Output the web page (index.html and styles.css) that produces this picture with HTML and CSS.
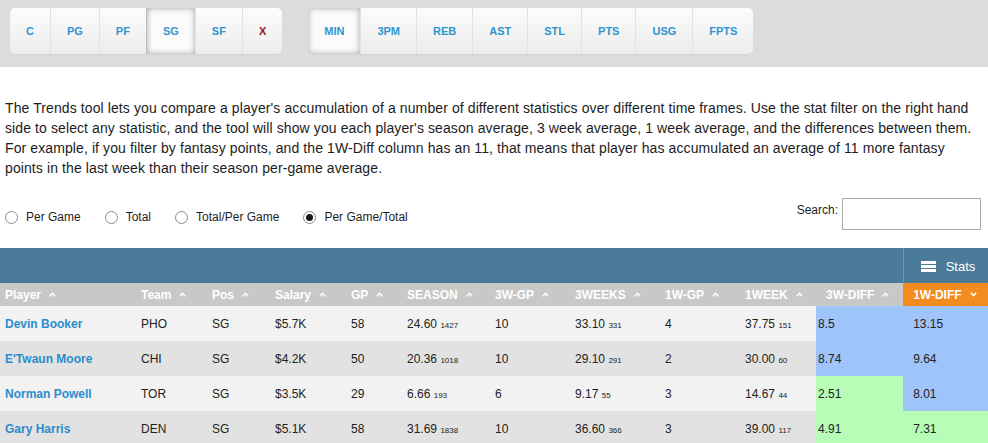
FILE: index.html
```html
<!DOCTYPE html>
<html>
<head>
<meta charset="utf-8">
<link rel="stylesheet" href="styles.css">
</head>
<body>
<div class="topbar">
  <div class="btn-group">
    <span class="btn">C</span>
    <span class="btn">PG</span>
    <span class="btn">PF</span>
    <span class="btn active">SG</span>
    <span class="btn">SF</span>
    <span class="btn clear">X</span>
  </div>
  <div class="btn-group">
    <span class="btn active">MIN</span>
    <span class="btn">3PM</span>
    <span class="btn">REB</span>
    <span class="btn">AST</span>
    <span class="btn">STL</span>
    <span class="btn">PTS</span>
    <span class="btn">USG</span>
    <span class="btn">FPTS</span>
  </div>
</div>

<div class="intro">
  <p>The Trends tool lets you compare a player's accumulation of a number of different statistics over different time frames. Use the stat filter on the right hand side to select any statistic, and the tool will show you each player's season average, 3 week average, 1 week average, and the differences between them. For example, if you filter by fantasy points, and the 1W-Diff column has an 11, that means that player has accumulated an average of 11 more fantasy points in the last week than their season per-game average.</p>
</div>

<div class="controls">
  <div class="radios">
    <label class="opt"><input type="radio" name="mode"><span>Per Game</span></label>
    <label class="opt"><input type="radio" name="mode"><span>Total</span></label>
    <label class="opt"><input type="radio" name="mode"><span>Total/Per Game</span></label>
    <label class="opt"><input type="radio" name="mode" checked><span>Per Game/Total</span></label>
  </div>
  <label class="search">Search:<input type="text"></label>
</div>

<table class="grid">
  <colgroup>
    <col style="width:136px"><col style="width:71px"><col style="width:63px"><col style="width:76px">
    <col style="width:56px"><col style="width:88px"><col style="width:80px"><col style="width:90px">
    <col style="width:80px"><col style="width:76px"><col style="width:87px"><col style="width:85px">
  </colgroup>
  <thead>
    <tr class="bar">
      <th colspan="11"></th>
      <th class="stats"><svg width="15" height="11" viewBox="0 0 15 11"><rect x="0" y="0" width="15" height="3" fill="#fff"/><rect x="0" y="4" width="15" height="3" fill="#fff"/><rect x="0" y="8" width="15" height="3" fill="#fff"/></svg><span>Stats</span></th>
    </tr>
    <tr class="heads">
      <th>Player<svg class="caret" width="7" height="5" viewBox="0 0 7 5"><path d="M0.8 4.2 L3.5 1.4 L6.2 4.2" fill="none" stroke="#fff" stroke-width="1.6"/></svg></th>
      <th>Team<svg class="caret" width="7" height="5" viewBox="0 0 7 5"><path d="M0.8 4.2 L3.5 1.4 L6.2 4.2" fill="none" stroke="#fff" stroke-width="1.6"/></svg></th>
      <th>Pos<svg class="caret" width="7" height="5" viewBox="0 0 7 5"><path d="M0.8 4.2 L3.5 1.4 L6.2 4.2" fill="none" stroke="#fff" stroke-width="1.6"/></svg></th>
      <th>Salary<svg class="caret" width="7" height="5" viewBox="0 0 7 5"><path d="M0.8 4.2 L3.5 1.4 L6.2 4.2" fill="none" stroke="#fff" stroke-width="1.6"/></svg></th>
      <th>GP<svg class="caret" width="7" height="5" viewBox="0 0 7 5"><path d="M0.8 4.2 L3.5 1.4 L6.2 4.2" fill="none" stroke="#fff" stroke-width="1.6"/></svg></th>
      <th>SEASON<svg class="caret" width="7" height="5" viewBox="0 0 7 5"><path d="M0.8 4.2 L3.5 1.4 L6.2 4.2" fill="none" stroke="#fff" stroke-width="1.6"/></svg></th>
      <th>3W-GP<svg class="caret" width="7" height="5" viewBox="0 0 7 5"><path d="M0.8 4.2 L3.5 1.4 L6.2 4.2" fill="none" stroke="#fff" stroke-width="1.6"/></svg></th>
      <th>3WEEKS<svg class="caret" width="7" height="5" viewBox="0 0 7 5"><path d="M0.8 4.2 L3.5 1.4 L6.2 4.2" fill="none" stroke="#fff" stroke-width="1.6"/></svg></th>
      <th>1W-GP<svg class="caret" width="7" height="5" viewBox="0 0 7 5"><path d="M0.8 4.2 L3.5 1.4 L6.2 4.2" fill="none" stroke="#fff" stroke-width="1.6"/></svg></th>
      <th>1WEEK<svg class="caret" width="7" height="5" viewBox="0 0 7 5"><path d="M0.8 4.2 L3.5 1.4 L6.2 4.2" fill="none" stroke="#fff" stroke-width="1.6"/></svg></th>
      <th class="h3wd">3W-DIFF<svg class="caret" width="7" height="5" viewBox="0 0 7 5"><path d="M0.8 4.2 L3.5 1.4 L6.2 4.2" fill="none" stroke="#fff" stroke-width="1.6"/></svg></th>
      <th class="sorted">1W-DIFF<svg class="caret" width="7" height="5" viewBox="0 0 7 5"><path d="M0.8 0.8 L3.5 3.6 L6.2 0.8" fill="none" stroke="#fff" stroke-width="1.6"/></svg></th>
    </tr>
  </thead>
  <tbody>
    <tr>
      <td class="name">Devin Booker</td><td>PHO</td><td>SG</td><td>$5.7K</td><td>58</td>
      <td>24.60 <small>1427</small></td><td>10</td><td>33.10 <small>331</small></td><td>4</td><td>37.75 <small>151</small></td>
      <td class="d3 blue">8.5</td><td class="d1 blue">13.15</td>
    </tr>
    <tr>
      <td class="name">E'Twaun Moore</td><td>CHI</td><td>SG</td><td>$4.2K</td><td>50</td>
      <td>20.36 <small>1018</small></td><td>10</td><td>29.10 <small>291</small></td><td>2</td><td>30.00 <small>60</small></td>
      <td class="d3 blue">8.74</td><td class="d1 blue">9.64</td>
    </tr>
    <tr>
      <td class="name">Norman Powell</td><td>TOR</td><td>SG</td><td>$3.5K</td><td>29</td>
      <td>6.66 <small>193</small></td><td>6</td><td>9.17 <small>55</small></td><td>3</td><td>14.67 <small>44</small></td>
      <td class="d3 green">2.51</td><td class="d1 blue">8.01</td>
    </tr>
    <tr>
      <td class="name">Gary Harris</td><td>DEN</td><td>SG</td><td>$5.1K</td><td>58</td>
      <td>31.69 <small>1838</small></td><td>10</td><td>36.60 <small>366</small></td><td>3</td><td>39.00 <small>117</small></td>
      <td class="d3 green">4.91</td><td class="d1 green">7.31</td>
    </tr>
  </tbody>
</table>
</body>
</html>
```
FILE: styles.css
```css
* { box-sizing: border-box; }
body {
  margin: 0;
  background: #fff;
  font-family: "Liberation Sans", Arial, sans-serif;
  color: #1e1e1e;
}

/* top filter bar */
.topbar {
  background: #dcdcdc;
  height: 67px;
  padding: 8px 10px 0;
  display: flex;
  gap: 26px;
  align-items: flex-start;
}
.btn-group {
  display: flex;
  height: 46px;
  border-radius: 5px;
  overflow: hidden;
  background: linear-gradient(#fcfcfc, #ececec);
  box-shadow: 0 1px 1px rgba(0,0,0,0.04);
}
.btn {
  display: flex;
  align-items: center;
  justify-content: center;
  padding: 0 16px;
  font-size: 11px;
  font-weight: bold;
  color: #2f95cf;
  border-left: 1px solid #e2e2e2;
}
.btn:first-child { border-left: none; }
.btn.clear { color: #a0141a; }
.btn.active {
  background: #fbfbfb;
  box-shadow: inset 0 0 6px rgba(0,0,0,0.35);
  border-left-color: #bdbdbd;
}

/* intro text */
.intro {
  padding: 31px 5px 0;
}
.intro p {
  margin: 0;
  font-size: 14px;
  line-height: 20px;
  letter-spacing: 0.1px;
  color: #1c1c1c;
}

/* radio + search row */
.controls {
  display: flex;
  justify-content: space-between;
  align-items: flex-start;
  padding: 20px 7px 18px 0;
  height: 70px;
}
.radios {
  display: flex;
  gap: 19px;
  margin-top: 12px;
  font-size: 12px;
}
.opt {
  display: flex;
  align-items: center;
}
.opt input {
  appearance: none;
  -webkit-appearance: none;
  margin: 0 3px 0 5px;
  width: 13px;
  height: 13px;
  border: 1px solid #8a8a8a;
  border-radius: 50%;
  background: #fff;
  position: relative;
}
.opt input:checked::after {
  content: "";
  position: absolute;
  left: 2px;
  top: 2px;
  width: 7px;
  height: 7px;
  border-radius: 50%;
  background: #1a1a1a;
}
.opt span { margin-left: 5px; }
.search {
  display: flex;
  align-items: flex-start;
  font-size: 12px;
  line-height: 14px;
  padding-top: 5px;
}
.search input {
  margin: -5px 0 0 4px;
  width: 139px;
  height: 32px;
  border: 1px solid #a9a9a9;
  padding: 0 4px;
}

/* table */
.grid {
  border-collapse: collapse;
  table-layout: fixed;
  width: 988px;
  font-size: 12px;
}
.grid .bar th {
  background: #4a7b99;
  height: 35px;
  padding: 0;
}
.grid .bar th.stats {
  border-left: 1px solid #6f98b1;
  color: #fff;
  font-weight: normal;
  font-size: 13px;
  text-align: left;
  padding: 2px 0 0 17px;
}
.stats svg { vertical-align: -1px; margin-right: 10px; }
.grid .heads th {
  background: #c8c8c8;
  color: #fff;
  font-weight: bold;
  text-align: left;
  height: 23px;
  padding: 0 0 0 5px;
  white-space: nowrap;
}
.grid .heads th.h3wd { padding-left: 10px; }
.grid .heads th.sorted { background: #f48b1f; padding-left: 10px; }
.caret { margin-left: 8px; vertical-align: 2px; }

.grid td {
  height: 35px;
  padding: 0 0 0 5px;
  color: #222;
  white-space: nowrap;
}
.grid tbody tr:nth-child(odd) td { background: #f2f2f2; }
.grid tbody tr:nth-child(even) td { background: #e2e2e2; }
.grid td.name { color: #2a8ccc; font-weight: bold; }
.grid td small { font-size: 8px; }
.grid tbody tr td.blue { background: #9fc4f9; }
.grid tbody tr td.green { background: #b7fcb7; }
.grid td.d3 { padding-left: 2px; }
.grid td.d1 { padding-left: 10px; }
```
